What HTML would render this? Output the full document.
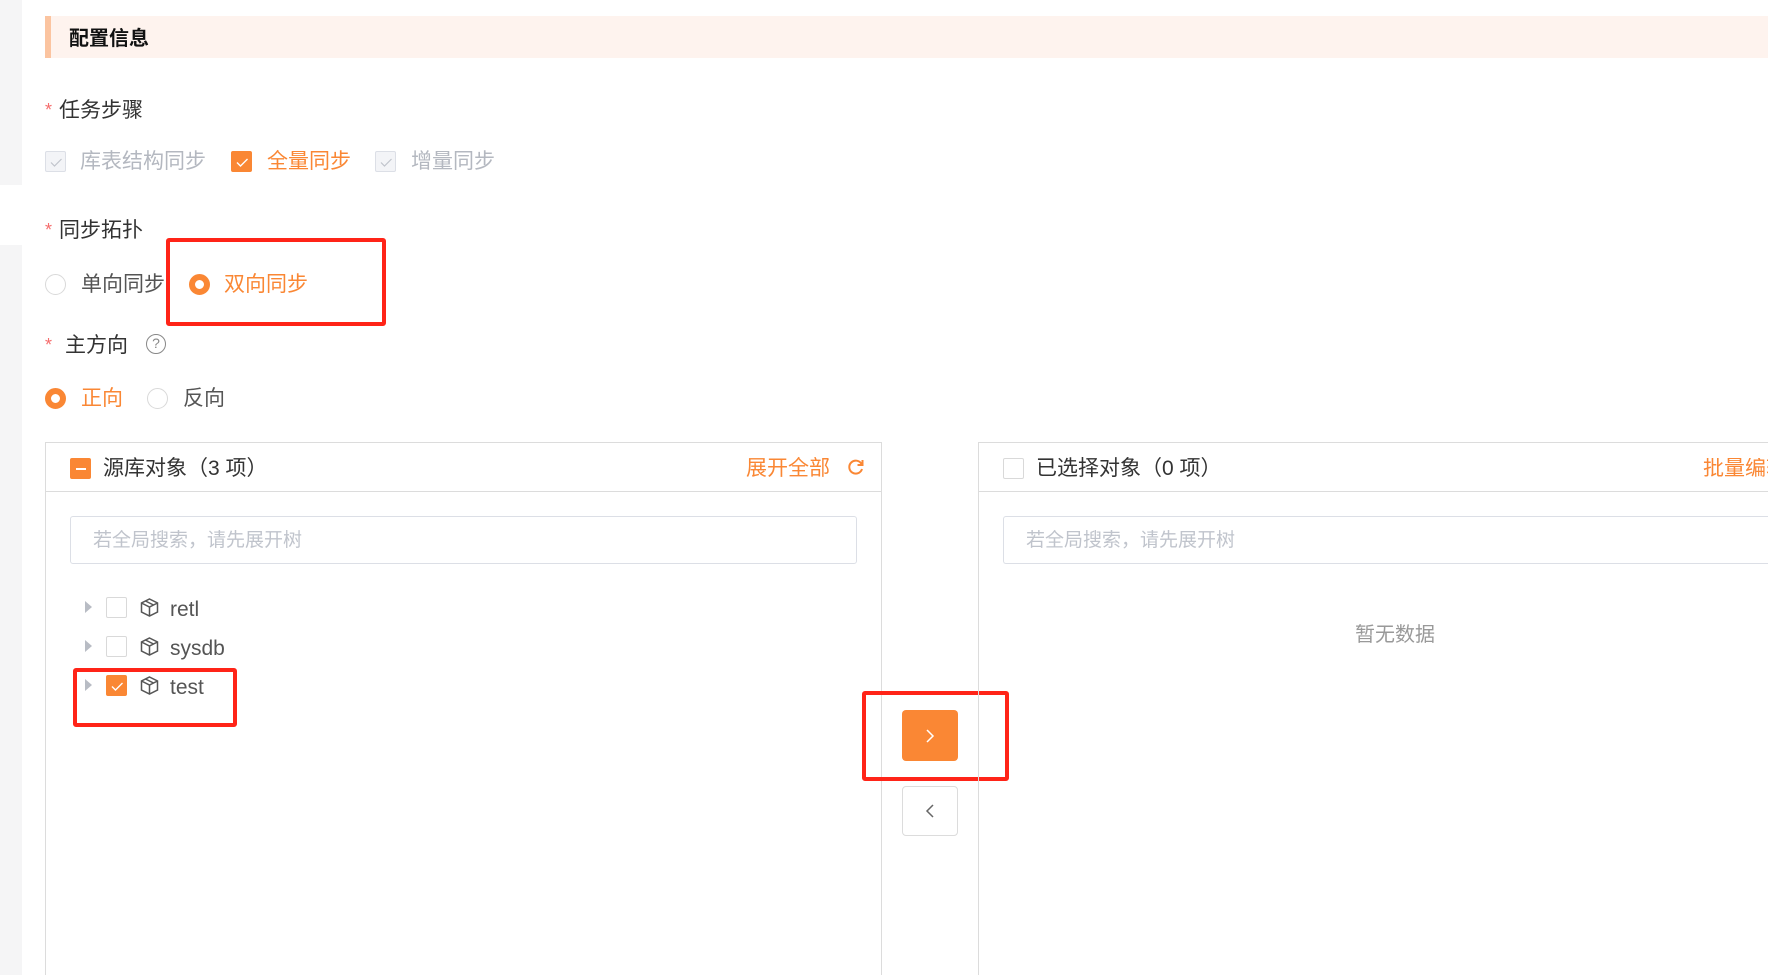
<!DOCTYPE html>
<html><head><meta charset="utf-8"><style>
*{box-sizing:border-box;margin:0;padding:0}
html,body{overflow:hidden}
body{width:1768px;height:975px;position:relative;overflow:hidden;background:#fff;font-family:"Liberation Sans","Noto Sans CJK SC",sans-serif;color:#333;font-size:21px}
.a{position:absolute;white-space:nowrap;line-height:1}
.gray{background:#f5f5f6;position:absolute;left:0;width:22px}
.cb{position:absolute;width:21px;height:21px;border:1px solid #d9d9d9;border-radius:2px;background:#fff}
.cb.dis{background:#f3f4f7;border-color:#dcdfe6}
.cb.on{background:#fa8734;border-color:#fa8734}
.cb svg{position:absolute;left:0;top:0}
.rd{position:absolute;width:21px;height:21px;border:1px solid #d9d9d9;border-radius:50%;background:#fff}
.rd.on{border:6px solid #fa8734}
.star{color:#f56c6c;font-size:18px}
.or{color:#fa8734}
.red{position:absolute;border:4px solid #ff2418;border-radius:3px}
</style></head><body>
<div class="gray" style="top:0;height:185px"></div>
<div class="gray" style="top:245px;height:730px"></div>
<div style="position:absolute;left:45px;top:16px;width:1723px;height:42px;background:#fef3ee;border-left:6px solid #fbc4a0"></div>
<div class="a" style="left:69px;top:29px;font-weight:bold;font-size:20px;color:#111">配置信息</div>

<div class="a star" style="left:45px;top:101px">*</div>
<div class="a" style="left:59px;top:100px">任务步骤</div>
<div class="cb dis" style="left:45px;top:151px"><svg width="21" height="21"><path d="M5 10.5l3.5 3.5 7-7" fill="none" stroke="#c0c4cc" stroke-width="1.2"/></svg></div>
<div class="a" style="left:80px;top:151px;color:#b4b8c0">库表结构同步</div>
<div class="cb on" style="left:231px;top:151px"><svg width="21" height="21"><path d="M5 10.5l3.5 3.5 7-7" fill="none" stroke="#fff" stroke-width="1.4"/></svg></div>
<div class="a or" style="left:267px;top:151px">全量同步</div>
<div class="cb dis" style="left:375px;top:151px"><svg width="21" height="21"><path d="M5 10.5l3.5 3.5 7-7" fill="none" stroke="#c0c4cc" stroke-width="1.2"/></svg></div>
<div class="a" style="left:411px;top:151px;color:#b4b8c0">增量同步</div>

<div class="a star" style="left:45px;top:221px">*</div>
<div class="a" style="left:59px;top:220px">同步拓扑</div>
<div class="rd" style="left:45px;top:274px"></div>
<div class="a" style="left:81px;top:274px;color:#555">单向同步</div>
<div class="rd on" style="left:189px;top:274px"></div>
<div class="a or" style="left:224px;top:274px">双向同步</div>
<div class="red" style="left:166px;top:238px;width:220px;height:88px"></div>

<div class="a star" style="left:45px;top:336px">*</div>
<div class="a" style="left:65px;top:335px">主方向</div>
<div style="position:absolute;left:146px;top:334px;width:20px;height:20px;border:1.5px solid #888;border-radius:50%;color:#888;font-size:14px;text-align:center;line-height:17px">?</div>
<div class="rd on" style="left:45px;top:388px"></div>
<div class="a or" style="left:81px;top:388px">正向</div>
<div class="rd" style="left:147px;top:388px"></div>
<div class="a" style="left:183px;top:388px;color:#555">反向</div>

<!-- left panel -->
<div style="position:absolute;left:45px;top:442px;width:837px;height:533px;border:1px solid #dcdcdc;border-bottom:none"></div>
<div style="position:absolute;left:45px;top:491px;width:837px;height:1px;background:#dcdcdc"></div>
<div class="cb on" style="left:70px;top:458px"><div style="position:absolute;left:5px;top:9px;width:10px;height:2px;background:#fff"></div></div>
<div class="a" style="left:103px;top:458px">源库对象（3 项）</div>
<div class="a or" style="left:746px;top:458px">展开全部</div>
<svg style="position:absolute;left:846px;top:457px" width="20" height="20" viewBox="0 0 20 20"><path d="M15.5 7A6.5 6.5 0 1 0 16 12" fill="none" stroke="#fa8734" stroke-width="2"/><path d="M16.5 3v5h-5" fill="none" stroke="#fa8734" stroke-width="2"/></svg>
<div style="position:absolute;left:70px;top:516px;width:787px;height:48px;border:1px solid #dcdfe6;border-radius:3px"></div>
<div class="a" style="left:93px;top:531px;font-size:19px;color:#c0c4cc">若全局搜索，请先展开树</div>

<div class="a" style="left:85px;top:601px;width:0;height:0;border-left:7px solid #b8bcc4;border-top:6px solid transparent;border-bottom:6px solid transparent"></div>
<div class="cb" style="left:106px;top:597px"></div>
<svg style="position:absolute;left:139px;top:597px" width="21" height="21" viewBox="0 0 21 21"><path d="M10.5 2l8 4v9l-8 4-8-4V6zM2.5 6l8 4 8-4M10.5 10v9M6.5 4l8 4" fill="none" stroke="#555" stroke-width="1.5"/></svg>
<div class="a" style="left:170px;top:599px;color:#555">retl</div>

<div class="a" style="left:85px;top:640px;width:0;height:0;border-left:7px solid #b8bcc4;border-top:6px solid transparent;border-bottom:6px solid transparent"></div>
<div class="cb" style="left:106px;top:636px"></div>
<svg style="position:absolute;left:139px;top:636px" width="21" height="21" viewBox="0 0 21 21"><path d="M10.5 2l8 4v9l-8 4-8-4V6zM2.5 6l8 4 8-4M10.5 10v9M6.5 4l8 4" fill="none" stroke="#555" stroke-width="1.5"/></svg>
<div class="a" style="left:170px;top:638px;color:#555">sysdb</div>

<div class="a" style="left:85px;top:679px;width:0;height:0;border-left:7px solid #b8bcc4;border-top:6px solid transparent;border-bottom:6px solid transparent"></div>
<div class="cb on" style="left:106px;top:675px"><svg width="21" height="21"><path d="M5 10.5l3.5 3.5 7-7" fill="none" stroke="#fff" stroke-width="1.4"/></svg></div>
<svg style="position:absolute;left:139px;top:675px" width="21" height="21" viewBox="0 0 21 21"><path d="M10.5 2l8 4v9l-8 4-8-4V6zM2.5 6l8 4 8-4M10.5 10v9M6.5 4l8 4" fill="none" stroke="#555" stroke-width="1.5"/></svg>
<div class="a" style="left:170px;top:677px;color:#555">test</div>
<div class="red" style="left:73px;top:668px;width:164px;height:59px"></div>

<!-- middle buttons -->
<div style="position:absolute;left:902px;top:710px;width:56px;height:51px;background:#fa8734;border-radius:4px"></div>
<svg style="position:absolute;left:922px;top:727px" width="16" height="18"><path d="M5 3l6 6-6 6" fill="none" stroke="#fff" stroke-width="1.5"/></svg>
<div style="position:absolute;left:902px;top:786px;width:56px;height:50px;background:#fff;border:1px solid #dcdcdc;border-radius:4px"></div>
<svg style="position:absolute;left:922px;top:802px" width="16" height="18"><path d="M11 3l-6 6 6 6" fill="none" stroke="#666" stroke-width="1.5"/></svg>
<div class="red" style="left:862px;top:691px;width:147px;height:90px"></div>

<!-- right panel -->
<div style="position:absolute;left:978px;top:442px;width:790px;height:533px;border:1px solid #dcdcdc;border-right:none;border-bottom:none"></div>
<div style="position:absolute;left:978px;top:491px;width:790px;height:1px;background:#dcdcdc"></div>
<div class="cb" style="left:1003px;top:458px"></div>
<div class="a" style="left:1036px;top:458px">已选择对象（0 项）</div>
<div style="position:absolute;left:1703px;top:458px;width:65px;height:22px;overflow:hidden"><div class="a or" style="left:0;top:0">批量编辑</div></div>
<div style="position:absolute;left:1003px;top:516px;width:765px;height:48px;border:1px solid #dcdfe6;border-right:none;border-radius:3px 0 0 3px"></div>
<div class="a" style="left:1026px;top:531px;font-size:19px;color:#c0c4cc">若全局搜索，请先展开树</div>
<div class="a" style="left:1355px;top:625px;font-size:20px;color:#999">暂无数据</div>
</body></html>
